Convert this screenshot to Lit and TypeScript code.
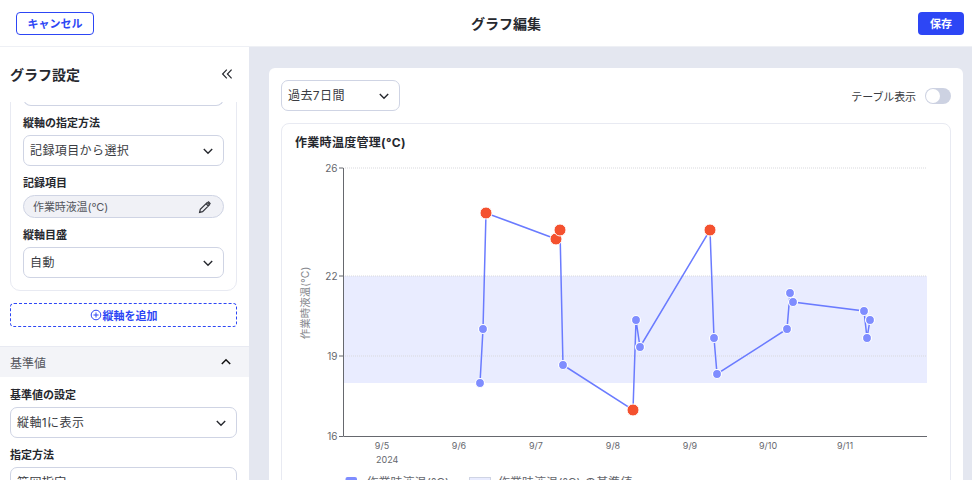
import { LitElement, html, svg, css, unsafeCSS } from "lit";
import { customElement } from "lit/decorators.js";

const FONT = unsafeCSS(`Inter, "Noto Sans CJK JP", sans-serif`);

// chart scale: value label -> pixel row inside the svg
const GRID = [
    { label: "26", y: 45 },
    { label: "22", y: 153 },
    { label: "19", y: 233 },
    { label: "16", y: 313.5 },
];

const DATES = [
    { label: "9/5", x: 101 },
    { label: "9/6", x: 178 },
    { label: "9/7", x: 255 },
    { label: "9/8", x: 332 },
    { label: "9/9", x: 409 },
    { label: "9/10", x: 487 },
    { label: "9/11", x: 564 },
];

const POINTS: { x: number; y: number; alert?: boolean }[] = [
    { x: 199, y: 260 },
    { x: 202, y: 206 },
    { x: 205, y: 90, alert: true },
    { x: 275, y: 116, alert: true },
    { x: 279, y: 107, alert: true },
    { x: 282, y: 242 },
    { x: 352, y: 287, alert: true },
    { x: 355, y: 197 },
    { x: 359, y: 224 },
    { x: 429, y: 107, alert: true },
    { x: 433, y: 215 },
    { x: 436, y: 251 },
    { x: 506, y: 206 },
    { x: 509, y: 170 },
    { x: 512, y: 179 },
    { x: 583, y: 188 },
    { x: 586, y: 215 },
    { x: 589, y: 197 },
];

const chevron = html`<svg class="chev" width="14" height="14" viewBox="0 0 14 14">
    <path d="M2.8 5 7 9.2 11.2 5" fill="none" stroke="currentColor" stroke-width="1.4" />
</svg>`;

@customElement("app-root")
export class AppRoot extends LitElement {
    static styles = css`
        :host {
            display: block;
            width: 972px;
            height: 480px;
            overflow: hidden;
            background: #e4e7f0;
            color: #26282e;
            font-family: ${FONT};
        }

        .header {
            height: 47px;
            box-sizing: border-box;
            padding: 0 8px 0 16px;
            background: #fff;
            border-bottom: 1px solid #eef0f5;
            display: flex;
            align-items: center;
            justify-content: space-between;
        }
        .header h1 {
            margin: 0;
            font-size: 14px;
            font-weight: 700;
        }
        .btn {
            height: 23px;
            box-sizing: border-box;
            border-radius: 4px;
            font-size: 11px;
            font-weight: 700;
            display: flex;
            align-items: center;
            justify-content: center;
        }
        .cancel {
            width: 78px;
            color: #2d46f5;
            background: #fff;
            border: 1px solid #2d46f5;
        }
        .save {
            width: 46px;
            color: #fff;
            background: #2d46f5;
        }

        .body {
            display: flex;
            height: 433px;
        }

        .side {
            width: 249px;
            flex: none;
            background: #fff;
            display: flex;
            flex-direction: column;
        }
        .side-title {
            height: 55px;
            flex: none;
            box-sizing: border-box;
            padding: 0 16px 2px 10px;
            display: flex;
            align-items: center;
            justify-content: space-between;
            font-size: 14px;
            font-weight: 700;
        }
        .scroll {
            flex: 1;
            overflow: hidden;
        }
        .axis-card {
            margin: -10px 12px 0 10px;
            padding: 0 12px 12px;
            border: 1px solid #e8eaf2;
            border-radius: 10px;
            display: flex;
            flex-direction: column;
        }
        .stub {
            height: 12px;
            border: 1px solid #cfd4e4;
            border-top: none;
            border-radius: 0 0 8px 8px;
        }
        .label {
            font-size: 11px;
            font-weight: 600;
            line-height: 16px;
            margin: 9px 0 4px;
        }
        .select {
            height: 31px;
            box-sizing: border-box;
            padding: 0 8px 2px 6px;
            border: 1px solid #cfd4e4;
            border-radius: 7px;
            background: #fff;
            display: flex;
            align-items: center;
            justify-content: space-between;
            font-size: 12px;
            letter-spacing: 0.4px;
            color: #3a3c42;
        }
        .chev {
            color: #26282e;
            margin-top: 2px;
        }
        .chip {
            height: 23px;
            box-sizing: border-box;
            padding: 0 11px 2px 9px;
            border: 1px solid #cfd4e4;
            border-radius: 12px;
            background: #f0f1f6;
            display: flex;
            align-items: center;
            justify-content: space-between;
            font-size: 11px;
            letter-spacing: -0.1px;
            color: #55575e;
        }
        .chip svg {
            margin-top: 2px;
        }
        .add {
            margin: 12px 12px 0 10px;
            height: 24px;
            box-sizing: border-box;
            border: 1px dashed #2d46f5;
            border-radius: 4px;
            color: #2d46f5;
            font-size: 11px;
            font-weight: 600;
            display: flex;
            align-items: center;
            justify-content: center;
            gap: 1px;
        }
        .section {
            margin-top: 19px;
            height: 31px;
            box-sizing: border-box;
            padding: 0 16px 0 10px;
            background: #f3f4f8;
            border-top: 1px solid #e8eaf2;
            display: flex;
            align-items: center;
            justify-content: space-between;
            font-size: 12px;
            color: #55575e;
        }
        .base {
            padding: 1px 12px 0 10px;
            display: flex;
            flex-direction: column;
        }

        .main {
            flex: 1;
            padding: 21px 9px 0 20px;
            min-width: 0;
        }
        .panel {
            height: 500px;
            box-sizing: border-box;
            padding: 12px 12px 0;
            background: #fff;
            border-radius: 6px;
        }
        .toolbar {
            display: flex;
            align-items: center;
            justify-content: space-between;
            margin-bottom: 12px;
        }
        .range {
            width: 119px;
        }
        .toggle {
            display: flex;
            align-items: center;
            gap: 9px;
            font-size: 11px;
            letter-spacing: -0.1px;
            color: #3a3c42;
        }
        .track {
            width: 26px;
            height: 16px;
            box-sizing: border-box;
            padding: 1px;
            border-radius: 8px;
            background: #cdd2e2;
        }
        .knob {
            width: 14px;
            height: 14px;
            border-radius: 50%;
            background: #fff;
        }
        .chart-card {
            border: 1px solid #e8eaf2;
            border-radius: 8px;
            height: 400px;
            box-sizing: border-box;
            padding: 11px 0 0 13px;
        }
        .chart-card h2 {
            margin: 0;
            font-size: 12px;
            font-weight: 700;
            line-height: 16px;
            letter-spacing: 0.3px;
        }
        .chart-card svg {
            display: block;
            margin-left: -14px;
        }
        .chart-card text {
            font-family: ${FONT};
            font-size: 9px;
            fill: #66686e;
        }
        .chart-card text.tick {
            font-size: 10px;
        }
        .chart-card text.axis-title {
            font-size: 10.5px;
            fill: #85878d;
        }
        .chart-card text.legend {
            font-size: 12px;
        }
    `;

    renderChart() {
        const line = POINTS.map((p) => `${p.x},${p.y}`).join(" ");
        return html`<svg width="668" height="370" viewBox="0 28 668 370">
            <rect x="62" y="153" width="584" height="107" fill="#e9ecff" />
            ${GRID.slice(0, 3).map(
                (g) => svg`<line x1="62" x2="646" y1=${g.y} y2=${g.y} stroke="#d9d9dd" stroke-dasharray="1 1" />`,
            )}
            ${GRID.map(
                (g) => svg`
                    <line x1="58" x2="62" y1=${g.y} y2=${g.y} stroke="#66686e" />
                    <text class="tick" x="56.5" y=${g.y + 3.5} text-anchor="end">${g.label}</text>
                `,
            )}
            <path d="M62.5 45V313.5H646" fill="none" stroke="#66686e" />
            <text class="axis-title" transform="translate(28 180) rotate(-90)" text-anchor="middle">
                作業時液温(°C)
            </text>
            ${DATES.map((d) => svg`<text x=${d.x} y="326" text-anchor="middle">${d.label}</text>`)}
            <text x="95" y="340">2024</text>
            <polyline points=${line} fill="none" stroke="#6a7bff" stroke-width="1.5" />
            ${POINTS.map((p) =>
                p.alert
                    ? svg`<circle cx=${p.x} cy=${p.y} r="6" fill="#f4512f" stroke="#fff" stroke-width="1" />`
                    : svg`<circle cx=${p.x} cy=${p.y} r="4.5" fill="#7f8dff" stroke="#fff" stroke-width="1.2" />`,
            )}
            <rect x="64.5" y="354" width="11.5" height="11.5" rx="2" fill="#7f8dff" />
            <text class="legend" x="85.5" y="364">作業時液温(°C)</text>
            <rect x="188.5" y="354.5" width="21" height="11" fill="#e9ecff" stroke="#cfd4e4" />
            <text class="legend" x="217" y="364">作業時液温(°C) の基準値</text>
        </svg>`;
    }

    render() {
        return html`
            <div class="header">
                <div class="btn cancel">キャンセル</div>
                <h1>グラフ編集</h1>
                <div class="btn save">保存</div>
            </div>
            <div class="body">
                <aside class="side">
                    <div class="side-title">
                        <span>グラフ設定</span>
                        <svg width="12" height="12" viewBox="0 0 12 12">
                            <path
                                d="M5.8 1.6 1.6 6l4.2 4.4M10.6 1.6 6.4 6l4.2 4.4"
                                fill="none"
                                stroke="#26282e"
                                stroke-width="1.2"
                            />
                        </svg>
                    </div>
                    <div class="scroll">
                        <div class="axis-card">
                            <div class="stub"></div>
                            <div class="label">縦軸の指定方法</div>
                            <div class="select">記録項目から選択${chevron}</div>
                            <div class="label">記録項目</div>
                            <div class="chip">
                                作業時液温(°C)
                                <svg width="14" height="14" viewBox="0 0 14 14">
                                    <path
                                        d="M1.6 12.4l.7-3 6.9-6.9 2.3 2.3-6.9 6.9zM8 3.7l2.3 2.3"
                                        fill="none"
                                        stroke="#33353b"
                                        stroke-width="1.2"
                                    />
                                    <path d="M9.6 2.1l1-1 2.3 2.3-1 1z" fill="#33353b" />
                                </svg>
                            </div>
                            <div class="label">縦軸目盛</div>
                            <div class="select">自動${chevron}</div>
                        </div>
                        <div class="add">
                            <svg width="12" height="12" viewBox="0 0 12 12">
                                <circle cx="6" cy="6" r="4.8" fill="none" stroke="currentColor" stroke-width="1" />
                                <path d="M3.5 6h5M6 3.5v5" stroke="currentColor" stroke-width="1" />
                            </svg>
                            縦軸を追加
                        </div>
                        <div class="section">
                            基準値
                            <svg width="14" height="14" viewBox="0 0 14 14">
                                <path d="M2.8 9 7 4.8 11.2 9" fill="none" stroke="#111" stroke-width="1.5" />
                            </svg>
                        </div>
                        <div class="base">
                            <div class="label">基準値の設定</div>
                            <div class="select">縦軸1に表示${chevron}</div>
                            <div class="label">指定方法</div>
                            <div class="select">範囲指定${chevron}</div>
                        </div>
                    </div>
                </aside>
                <main class="main">
                    <div class="panel">
                        <div class="toolbar">
                            <div class="select range">過去7日間${chevron}</div>
                            <div class="toggle">
                                テーブル表示
                                <div class="track"><div class="knob"></div></div>
                            </div>
                        </div>
                        <div class="chart-card">
                            <h2>作業時温度管理(°C)</h2>
                            ${this.renderChart()}
                        </div>
                    </div>
                </main>
            </div>
        `;
    }
}
